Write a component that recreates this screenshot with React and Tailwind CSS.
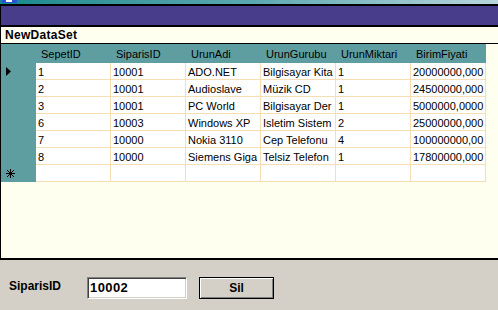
import React from "react";

const COLUMNS = ["SepetID", "SiparisID", "UrunAdi", "UrunGurubu", "UrunMiktari", "BirimFiyati"];

const ROWS = [
  ["1", "10001", "ADO.NET", "Bilgisayar Kita", "1", "20000000,000"],
  ["2", "10001", "Audioslave", "Müzik CD", "1", "24500000,000"],
  ["3", "10001", "PC World", "Bilgisayar Der", "1", "5000000,0000"],
  ["6", "10003", "Windows XP", "Isletim Sistem", "2", "25000000,000"],
  ["7", "10000", "Nokia 3110", "Cep Telefonu", "4", "100000000,00"],
  ["8", "10000", "Siemens Giga", "Telsiz Telefon", "1", "17800000,000"],
];

const Arrow = () => (
  <svg width="5" height="9" viewBox="0 0 5 9" className="block">
    <polygon points="0,0 5,4.5 0,9" fill="#000" />
  </svg>
);

const Star = () => (
  <svg width="9" height="9" viewBox="0 0 9 9" className="block">
    <g stroke="#000" strokeWidth="1" shapeRendering="crispEdges">
      <line x1="4.5" y1="0" x2="4.5" y2="9" />
      <line x1="0" y1="4.5" x2="9" y2="4.5" />
      <line x1="1" y1="1" x2="8" y2="8" />
      <line x1="8" y1="1" x2="1" y2="8" />
    </g>
  </svg>
);

const Row = ({ cells, marker }) => (
  <div className="flex h-[17px]">
    <div className="flex w-[35px] items-center bg-[#5f9ea0] pl-[5px]">{marker}</div>
    {cells.map((c, i) => (
      <div
        key={i}
        className="box-border h-[17px] w-[75px] overflow-hidden whitespace-nowrap border-r border-b border-[#f5deb3] bg-white pl-[2px] text-[11px] leading-[18px] text-black"
      >
        {c}
      </div>
    ))}
  </div>
);

export default function App() {
  return (
    <div className="flex h-[310px] w-[498px] flex-col overflow-hidden bg-[#d4d0c8] font-['Liberation_Sans',Arial,sans-serif]">
      {/* title bar sliver */}
      <div className="flex h-[4px] bg-gradient-to-r from-[#118a8c] via-[#5aa8b0] to-[#b8d6dc]">
        <div className="ml-[2px] h-[3px] w-[15px] bg-[#2a4fd8]">
          <div className="ml-[4px] h-[2px] w-[6px] bg-white" />
        </div>
      </div>

      {/* data grid */}
      <div className="flex h-[256px] flex-col border-l border-b-2 border-black bg-[#fffff0]">
        <div className="h-[2px] bg-black" />
        <div className="h-[19px] bg-[#483d8b]" />
        <div className="h-[2px] bg-black" />
        <div className="h-[16px] pl-[4px] text-[12px] font-bold leading-[16px] tracking-[0.3px] text-black">NewDataSet</div>
        <div className="h-[1px] bg-black" />

        <div className="flex h-[19px]">
          <div className="w-[35px] bg-[#5f9ea0]" />
          {COLUMNS.map((c) => (
            <div key={c} className="h-[19px] w-[75px] overflow-hidden bg-[#5f9ea0] pl-[5px] text-[11px] leading-[21px] text-black">
              {c}
            </div>
          ))}
        </div>

        {ROWS.map((r, i) => (
          <Row key={i} cells={r} marker={i === 0 ? <Arrow /> : null} />
        ))}
        <Row cells={["", "", "", "", "", ""]} marker={<Star />} />
      </div>

      {/* delete form */}
      <div className="flex items-start pl-[9px] pt-[17px]">
        <div className="mt-[2px] w-[78px] text-[12px] font-bold leading-[14px] text-black">SiparisID</div>
        <div className="box-border flex h-[22px] w-[100px] items-center border border-t-[#808080] border-l-[#808080] border-b-white border-r-white bg-white pl-[2px] text-[13px] font-bold tracking-[0.4px] text-black shadow-[inset_1px_1px_0_#404040,inset_-1px_-1px_0_#d4d0c8]">
          10002
        </div>
        <button
          type="button"
          className="ml-[12px] box-border h-[22px] w-[75px] border border-black bg-[#d4d0c8] text-[12px] font-bold text-black shadow-[inset_1px_1px_0_#ffffff,inset_-1px_-1px_0_#808080]"
        >
          Sil
        </button>
      </div>
    </div>
  );
}
